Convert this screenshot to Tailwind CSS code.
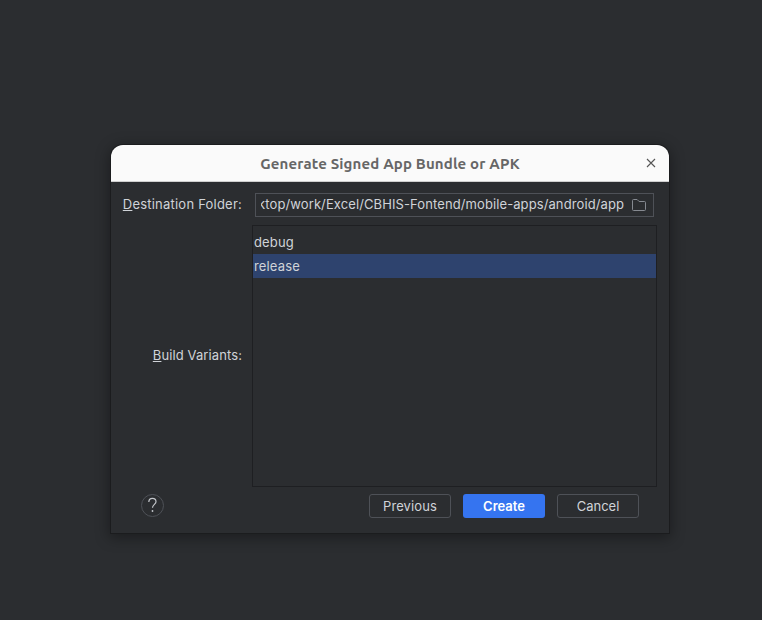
<!DOCTYPE html>
<html lang="en">
<head>
<meta charset="utf-8">
<title>Generate Signed App Bundle or APK</title>
<script src="https://cdn.jsdelivr.net/npm/@tailwindcss/browser@4"></script>
</head>
<body class="w-[762px] h-[620px] overflow-hidden bg-[#2b2d30] font-['Inter','Noto_Sans',sans-serif] text-[13px] leading-4 text-[#d0d3d8]">
<div class="h-[620px] pt-[145px] pl-[111px]">
  <section class="w-[558px] h-[388px] flex flex-col rounded-t-[12px] bg-[#2b2d30] shadow-[0_0_0_1px_#1b1c1e,0_3px_14px_2px_rgba(0,0,0,0.35)]">
    <header class="h-[37px] shrink-0 grid grid-cols-[36px_1fr_36px] items-center rounded-t-[12px] bg-[#fafafa] border-b border-[#cfcfcf] text-[#666]">
      <h1 class="col-start-2 pt-px text-center whitespace-nowrap font-['Ubuntu','Noto_Sans',sans-serif] font-bold text-[15px] leading-5 tracking-[0.15px]">Generate Signed App Bundle or APK</h1>
      <button class="flex justify-center" aria-label="Close"><svg width="10" height="10" viewBox="0 0 10 10" fill="none" stroke="#555" stroke-width="1.1"><path d="M1 1 9 9M9 1 1 9"/></svg></button>
    </header>
    <div class="grid grid-cols-[131px_405px] gap-x-[10px] pt-[11px]">
      <label class="h-6 pb-0.5 flex items-center justify-end whitespace-nowrap tracking-[0.22px]"><span><span class="underline underline-offset-1">D</span>estination Folder:</span></label>
      <div class="ml-[3px] mr-[3px] h-6 flex items-center border border-[#4e5157] pl-[5px] pr-[6px]">
        <div class="w-[364px] pb-0.5 overflow-hidden flex justify-end whitespace-nowrap tracking-[0.1px]"><span>ktop/work/Excel/CBHIS-Fontend/mobile-apps/android/app</span></div>
        <svg class="ml-[7px] shrink-0" width="16" height="16" viewBox="0 0 16 16" fill="none" stroke="#868a91"><path d="M1.5 12.5v-9a1 1 0 0 1 1-1h3.6l2 2h5.4a1 1 0 0 1 1 1v7a1 1 0 0 1-1 1h-11a1 1 0 0 1-1-1z"/></svg>
      </div>
      <label class="mt-2 h-[262px] pb-0.5 flex items-center justify-end whitespace-nowrap tracking-[0.1px]"><span><span class="underline underline-offset-1">B</span>uild Variants:</span></label>
      <ul class="mt-2 h-[262px] border border-[#1e1f22] pt-1 tracking-[0.15px]">
        <li class="h-6 pl-px flex items-center">debug</li>
        <li class="h-6 pl-px flex items-center bg-[#2e436e]">release</li>
      </ul>
    </div>
    <footer class="flex items-center pt-[7px] pl-[30px] pr-[30px]">
      <button class="size-6 mr-auto" aria-label="Help"><svg width="24" height="24" viewBox="0 0 24 24" fill="none"><circle cx="11.5" cy="11.5" r="11" stroke="#4e5157"/><path d="M7.8 8c.1-2.3 1.6-3.6 3.6-3.6s3.6 1.3 3.6 3.3c0 2.6-3.5 2.9-3.5 6.1" stroke="#c4c7cc" stroke-width="1.2"/><circle cx="11.5" cy="17" r=".9" fill="#c4c7cc"/></svg></button>
      <div class="flex gap-3">
        <button class="w-[82px] h-6 rounded-[3px] border border-[#4e5157] tracking-[0.12px]">Previous</button>
        <button class="w-[82px] h-6 rounded-[3px] bg-[#3574f0] text-white font-semibold">Create</button>
        <button class="w-[82px] h-6 rounded-[3px] border border-[#4e5157]">Cancel</button>
      </div>
    </footer>
  </section>
</div>
</body>
</html>
